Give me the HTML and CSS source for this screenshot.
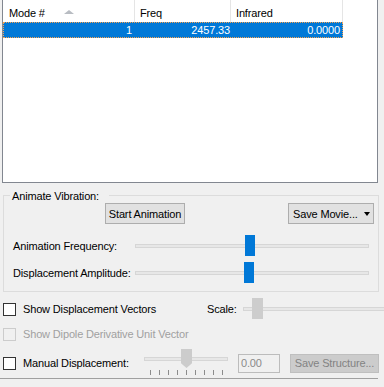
FILE: index.html
```html
<!DOCTYPE html>
<html lang="en">
<head>
  <meta charset="UTF-8" />
  <title>Vibrations</title>
  <link rel="stylesheet" href="styles.css">
</head>
<body>
<div class="modes">
  <div class="modes-head">
    <div class="col col-mode">Mode # <span class="sort-arrow"></span></div>
    <div class="col col-freq">Freq</div>
    <div class="col col-ir">Infrared</div>
  </div>
  <div class="mode-row selected">
    <div class="cell col-mode">1</div>
    <div class="cell col-freq">2457.33</div>
    <div class="cell col-ir">0.0000</div>
  </div>
</div>

<div class="group">
  <span class="group-title">Animate Vibration:</span>
  <div class="btn-row">
    <button class="btn btn-start">Start Animation</button>
    <button class="btn btn-movie">Save Movie... <span class="drop-arrow"></span></button>
  </div>
  <div class="slider-row">
    <span class="slider-label">Animation Frequency:</span>
    <div class="slider slider-wide">
      <div class="track"></div>
      <div class="thumb thumb-blue" style="left: 47%"></div>
    </div>
  </div>
  <div class="slider-row second">
    <span class="slider-label">Displacement Amplitude:</span>
    <div class="slider slider-wide">
      <div class="track"></div>
      <div class="thumb thumb-blue" style="left: 46.6%"></div>
    </div>
  </div>
</div>

<div class="opt-row row-vectors">
  <label class="check check-vectors"><span class="box"></span>Show Displacement Vectors</label>
  <span class="scale-label">Scale:</span>
  <div class="slider slider-scale">
    <div class="track"></div>
    <div class="thumb thumb-gray" style="left: 9px"></div>
  </div>
</div>

<div class="opt-row row-dipole">
  <label class="check disabled"><span class="box"></span>Show Dipole Derivative Unit Vector</label>
</div>

<div class="opt-row row-manual">
  <label class="check check-manual"><span class="box"></span>Manual Displacement:</label>
  <div class="slider slider-manual">
    <div class="track"></div>
    <div class="thumb thumb-point" style="left: 37px"></div>
    <div class="ticks">
      <span></span><span></span><span></span><span></span><span></span>
      <span></span><span></span><span></span><span></span>
    </div>
  </div>
  <div class="num-box">0.00</div>
  <button class="btn btn-save" disabled>Save Structure...</button>
</div>

<div class="bottom-line"></div>
</body>
</html>
```

FILE: styles.css
```css
body {
  margin: 0;
  width: 384px;
  height: 387px;
  overflow: hidden;
  background: #f0f0f0;
  font-family: "Liberation Sans", Arial, sans-serif;
  font-size: 11px;
  letter-spacing: -0.15px;
  color: #000;
}

/* mode list */
.modes {
  margin-left: 2px;
  width: 376px;
  height: 183px;
  box-sizing: border-box;
  background: #fff;
  border: 1px solid #828790;
  border-top: none;
}
.modes-head {
  display: flex;
  height: 22px;
}
.col {
  box-sizing: border-box;
  height: 22px;
  line-height: 26px;
  padding-left: 5px;
  border-right: 1px solid #e5e5e5;
}
.col-mode { width: 132px; }
.col-freq { width: 96px; }
.col-ir { width: 112px; }
.modes-head .col-mode { padding-left: 6px; }
.sort-arrow {
  display: inline-block;
  margin-left: 16px;
  vertical-align: 3px;
  border-left: 5px solid transparent;
  border-right: 5px solid transparent;
  border-bottom: 4px solid #b8bcc2;
}
.mode-row {
  display: flex;
  width: 340px;
  height: 16px;
  box-sizing: border-box;
}
.mode-row.selected {
  background: #0078d7;
  color: #fff;
  border: 1px dotted #f7a250;
}
.cell {
  box-sizing: border-box;
  text-align: right;
  line-height: 14px;
  padding-right: 3px;
}
.cell.col-mode { width: 131px; }
.cell.col-freq { width: 96px; padding-right: 1px; }
.cell.col-ir { width: 111px; padding-right: 2px; }

/* animate group */
.group {
  margin: 12px 0 0 3px;
  width: 376px;
  box-sizing: border-box;
  border: 1px solid #dcdcdc;
  padding-bottom: 8px;
}
.group-title {
  display: block;
  width: fit-content;
  margin: -7px 0 0 6px;
  padding: 0 10px 0 2px;
  line-height: 14px;
  background: #f0f0f0;
}
.btn-row {
  display: flex;
  padding-right: 4px;
}
.btn {
  font: inherit;
  letter-spacing: inherit;
  height: 21px;
  padding: 0;
  background: #e1e1e1;
  border: 1px solid #adadad;
  color: #000;
  flex-shrink: 0;
}
.btn-start {
  margin-left: 101px;
  width: 80px;
}
.btn-movie {
  margin-left: auto;
  width: 86px;
  padding-left: 4px;
  text-align: left;
}
.drop-arrow {
  display: inline-block;
  margin-left: 3px;
  vertical-align: 2px;
  border-left: 3.5px solid transparent;
  border-right: 3.5px solid transparent;
  border-top: 4px solid #000;
}
.slider-row {
  display: flex;
  align-items: center;
  height: 21px;
  margin-top: 11px;
  padding-left: 9px;
}
.slider-row.second { margin-top: 6px; }
.slider-label { width: 122px; flex-shrink: 0; }

/* sliders */
.slider {
  position: relative;
  height: 21px;
  display: flex;
  align-items: center;
  flex-shrink: 0;
}
.slider-wide { width: 234px; }
.track {
  flex: 1;
  height: 4px;
  box-sizing: border-box;
  background: #e7e7e7;
  border: 1px solid #d6d6d6;
}
.thumb {
  position: absolute;
  top: 0;
  width: 11px;
  height: 21px;
}
.thumb-blue {
  width: 10px;
  background: #0078d7;
}
.thumb-gray {
  background: #cdcdcd;
}

/* options */
.opt-row {
  display: flex;
  align-items: center;
  height: 22px;
}
.row-vectors { margin-top: 6px; }
.row-dipole { margin-top: 2px; height: 24px; }
.row-manual { margin-top: 5px; height: 24px; }
.check {
  display: flex;
  align-items: center;
  margin-left: 3px;
  flex-shrink: 0;
}
.box {
  width: 13px;
  height: 13px;
  box-sizing: border-box;
  border: 1px solid #333;
  background: #fff;
  margin-right: 7px;
}
.check.disabled { color: #a0a0a0; }
.check.disabled .box {
  border-color: #cccccc;
  background: #f0f0f0;
}
.check-vectors { width: 204px; }
.scale-label { width: 36px; flex-shrink: 0; }
.slider-scale {
  width: 150px;
  height: 22px;
}
.check-manual { width: 141px; }
.slider-manual {
  width: 84px;
  height: 24px;
  align-items: flex-start;
}
.slider-manual .track {
  margin-top: 6px;
  height: 4px;
}
.thumb-point {
  top: -2px;
  width: 11px;
  height: 19px;
  background: #cccccc;
  clip-path: polygon(0 0, 100% 0, 100% 75%, 50% 100%, 0 75%);
}
.ticks {
  position: absolute;
  left: 6px;
  top: 19px;
  width: 73px;
  display: flex;
  justify-content: space-between;
}
.ticks span {
  width: 1px;
  height: 5px;
  background: #8c8c8c;
}
.num-box {
  margin-left: 10px;
  width: 42px;
  height: 19px;
  box-sizing: border-box;
  border: 1px solid #bcbcbc;
  color: #8a8a8a;
  line-height: 17px;
  padding-left: 2px;
  flex-shrink: 0;
}
.btn-save {
  margin-left: 10px;
  width: 89px;
  height: 19px;
  background: #cccccc;
  border-color: #bfbfbf;
  color: #838383;
}
.bottom-line {
  margin-top: 3px;
  width: 378px;
  border-top: 1px solid #a0a0a0;
}
```
